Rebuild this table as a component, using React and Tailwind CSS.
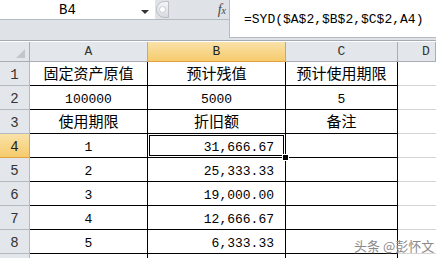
const mono = { fontFamily: '"Liberation Mono", "DejaVu Sans Mono", monospace' };

const rows = [
  ["固定资产原值", "预计残值", "预计使用期限"],
  ["100000", "5000", "5"],
  ["使用期限", "折旧额", "备注"],
  ["1", "31,666.67", ""],
  ["2", "25,333.33", ""],
  ["3", "19,000.00", ""],
  ["4", "12,666.67", ""],
  ["5", "6,333.33", ""],
  ["", "", ""],
];

const isNum = (s) => /^[0-9,.]+$/.test(s);

const Cell = ({ text, right, selected }) => (
  <div
    className={`relative h-[24px] border-r border-b border-black flex items-center ${
      right ? "justify-end pr-[11px]" : "justify-center"
    }`}
  >
    {text && (
      <span
        className={isNum(text) ? "text-[13px] pt-[4px]" : "text-[15px]"}
        style={isNum(text) ? mono : undefined}
      >
        {text}
      </span>
    )}
    {selected && (
      <>
        <div className="absolute inset-0 border border-white">
          <div className="absolute inset-0 border border-black" />
        </div>
        <div className="absolute -right-[4px] -bottom-[4px] w-[7px] h-[7px] bg-black border border-white z-10" />
      </>
    )}
  </div>
);

export default function App() {
  return (
    <div
      className="w-[436px] h-[258px] overflow-hidden bg-white text-black relative"
      style={{ fontFamily: '"Noto Sans CJK SC", "Noto Sans", sans-serif' }}
    >
      {/* formula bar */}
      <div className="flex h-[41px] bg-[#dfe3e8] border-b border-[#a4abb4]">
        <div className="w-[229px] flex flex-col">
          <div className="h-[20px] flex border-b border-[#b4bac2]">
            <div className="w-[155px] bg-white flex items-center relative">
              <span className="flex-1 text-center text-[14px] pr-[20px] pt-[2px]" style={mono}>
                B4
              </span>
              <span className="absolute right-[6px] top-[10px] w-0 h-0 border-l-[4px] border-r-[4px] border-t-[4px] border-l-transparent border-r-transparent border-t-[#333]" />
            </div>
            <div className="flex-1 flex items-center">
              <div className="ml-[1px] w-[13px] h-[17px] rounded-l-full border border-[#b9bec5] bg-gradient-to-b from-[#f4f5f7] to-[#d6dadf] flex items-center pl-[2px]">
                <div className="w-[7px] h-[7px] rounded-full bg-white border border-[#c8ccd2]" />
              </div>
              <span
                className="ml-auto mr-[3px] italic text-[14px] text-[#444] leading-none"
                style={{ fontFamily: '"Liberation Serif", serif' }}
              >
                f<span className="text-[10px]">x</span>
              </span>
            </div>
          </div>
        </div>
        <div className="flex-1 h-[38px] bg-white border-l border-b border-[#b4bac2] pl-[14px] pt-[4px]">
          <span className="text-[13px]" style={mono}>
            =SYD($A$2,$B$2,$C$2,A4)
          </span>
        </div>
      </div>

      {/* sheet */}
      <div className="mt-[1px] grid grid-cols-[30px_118px_138px_112px_1fr]">
        {/* column headers */}
        <div className="h-[20px] bg-[#e3e6ea] border-r border-b border-[#a9aeb5] relative">
          <span
            className="absolute right-[4px] bottom-[3px] w-0 h-0"
            style={{ borderBottom: "9px solid #c3c7cd", borderLeft: "9px solid transparent" }}
          />
        </div>
        {["A", "B", "C", "D"].map((c) => (
          <div
            key={c}
            className={`h-[20px] border-r border-b flex items-center justify-center text-[13px] ${
              c === "B"
                ? "bg-gradient-to-b from-[#f9e2a8] to-[#f6cb6b] border-[#e2a33f] text-[#222]"
                : "bg-[#e3e6ea] border-[#a9aeb5] text-[#333]"
            } ${c === "D" ? "justify-start pl-[24px]" : ""}`}
            style={mono}
          >
            {c}
          </div>
        ))}

        {rows.map((r, i) => {
          const n = i + 1;
          return [
            <div
              key={`h${n}`}
              className={`h-[24px] border-r border-b flex items-center justify-center text-[14px] pt-[4px] ${
                n === 4
                  ? "bg-gradient-to-b from-[#f9e2a8] to-[#f6cb6b] border-[#e2a33f] text-[#222]"
                  : "bg-[#e3e6ea] border-[#b3b9c0] text-[#333]"
              }`}
              style={mono}
            >
              {n < 9 ? n : ""}
            </div>,
            <Cell key={`a${n}`} text={r[0]} />,
            <Cell key={`b${n}`} text={r[1]} right={n >= 4} selected={n === 4} />,
            <Cell key={`c${n}`} text={r[2]} />,
            <div key={`d${n}`} className="h-[24px] border-b border-[#d4d4d4]" />,
          ];
        })}
      </div>

      {/* watermark */}
      <div
        className="absolute left-[354px] top-[236px] whitespace-nowrap text-[13px] text-[#8a8a8a]"
        style={{ textShadow: "0 0 2px #fff" }}
      >
        头条 @彭怀文
      </div>
    </div>
  );
}
